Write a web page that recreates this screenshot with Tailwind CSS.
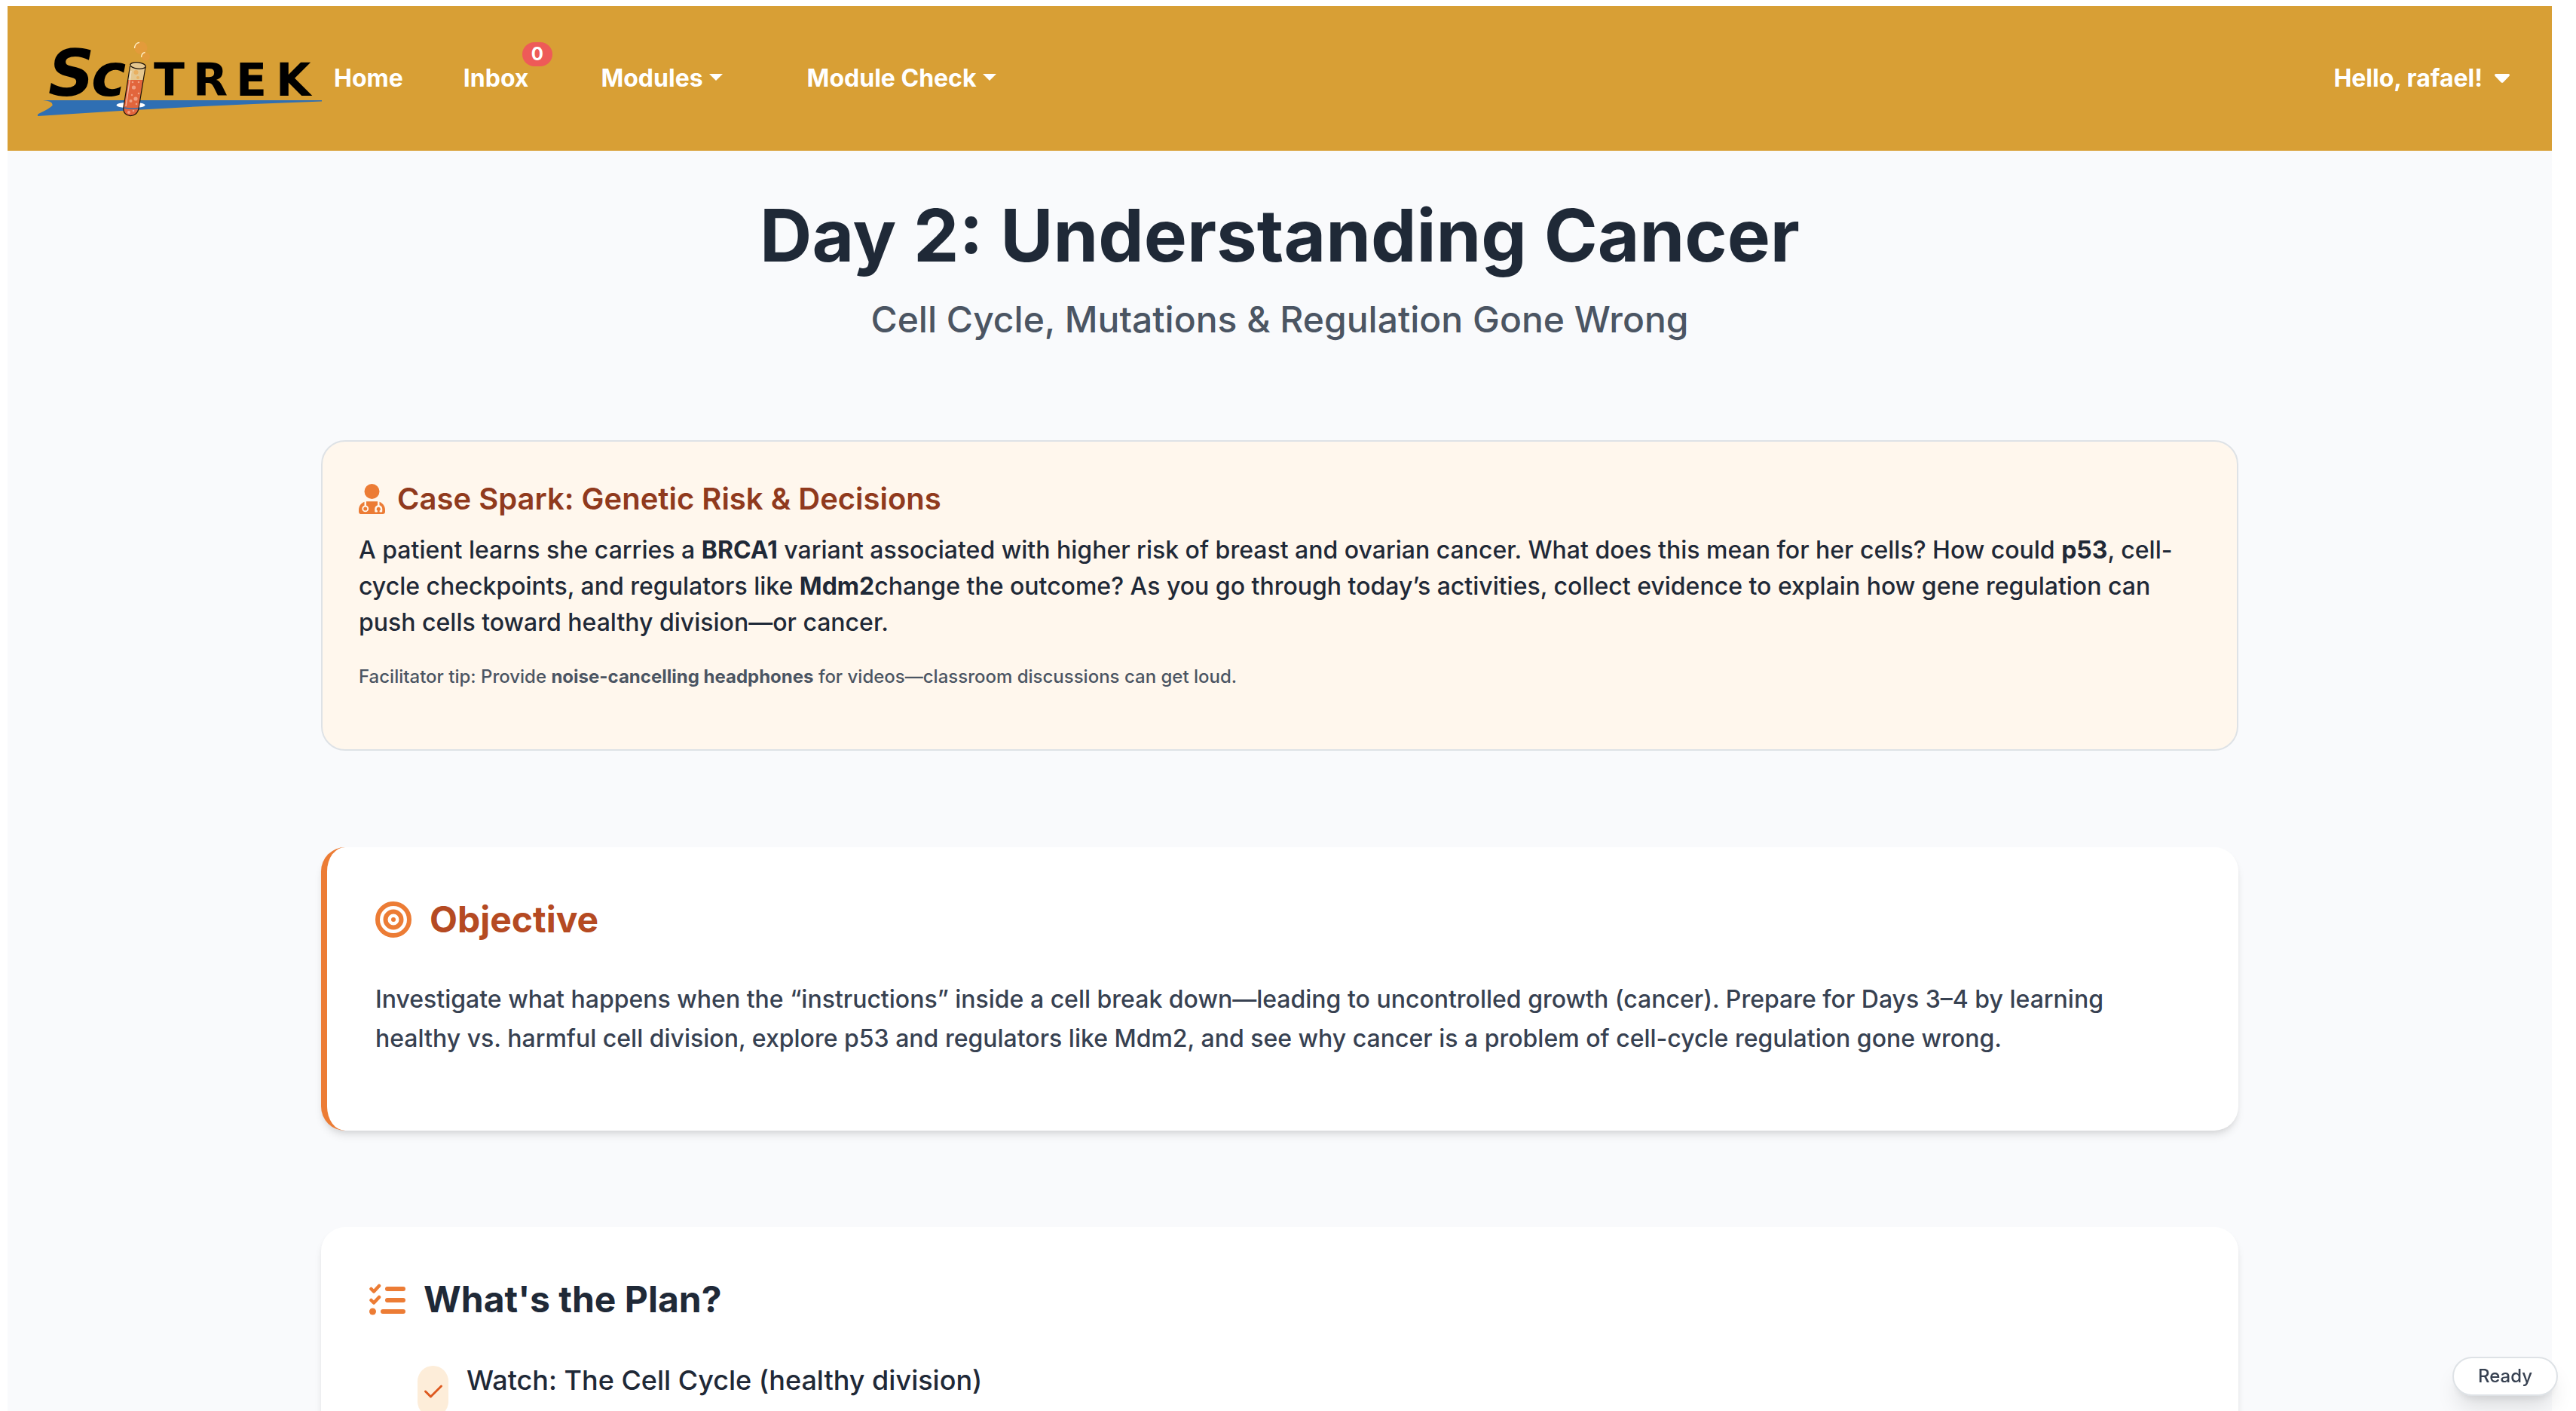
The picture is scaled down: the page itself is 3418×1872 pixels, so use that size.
<!DOCTYPE html>
<html lang="en">
<head>
<meta charset="utf-8">
<title>SciTrek – Day 2: Understanding Cancer</title>
<meta name="viewport" content="width=device-width, initial-scale=1">
<script src="https://cdn.jsdelivr.net/npm/@tailwindcss/browser@4"></script>
</head>
<body class="flex min-h-screen flex-col bg-white pt-2 pr-8 pl-[10px] font-['Inter',sans-serif] text-[32px] leading-[48px] font-medium text-[#1f2937]">

<header class="flex min-h-[192px] shrink-0 items-center bg-[#d89f35] pr-14 pl-10 font-bold text-white">
  <a href="#" class="mr-4 shrink-0" aria-label="SciTrek">
    <svg width="377" height="104" viewBox="50 52 377 104">
      <path d="M57 133H427V134.500Q240 141 50 154Q49 152 52 150.500Q66 144 69.500 140Q71 134 57 133Z" fill="#2f6fb3"/>
      <g fill="#000" font-family="'DejaVu Sans',sans-serif" font-weight="700">
        <text x="64" y="127" font-size="85" font-style="oblique">S</text>
        <text x="121" y="127" font-size="78" font-style="oblique">c</text>
        <text x="204 256 313 366" y="127" font-size="60">TREK</text>
      </g>
      <ellipse cx="173.500" cy="139.500" rx="19" ry="4" fill="#fff"/>
      <path d="M172.500 87L163.800 143C163 157 182 157 184 144L193 88Z" fill="#e5c78f"/>
      <path d="M169.500 106L163.800 143C163 157 182 157 184 144L190 106Z" fill="#e2653c"/>
      <path d="M174 94L167 141" stroke="#fff" stroke-opacity=".5" stroke-width="1.500" fill="none"/>
      <g fill="#f0a183">
        <circle cx="177.500" cy="116" r="2.600"/><circle cx="180" cy="131" r="2.600"/><circle cx="173.500" cy="134" r="2"/>
        <circle cx="171" cy="149" r="2"/><circle cx="177" cy="147" r="1.300"/><circle cx="184" cy="109" r="1.300"/>
        <circle cx="176" cy="109" r="1.300"/><circle cx="184" cy="124" r="1.300"/><circle cx="175" cy="126" r="1.200"/><circle cx="181" cy="138" r="1.300"/>
      </g>
      <circle cx="180.500" cy="96" r="3" fill="#e9b061"/><circle cx="183" cy="103" r="2" fill="#e9b061"/>
      <path d="M164 143Q174 145 184 143.500" stroke="#2f6fb3" stroke-width="1.500" fill="none"/>
      <path d="M172.500 88L163.800 143C163 157 182 157 184 144L193 89" fill="none" stroke="#1c1208" stroke-width="1.200"/>
      <ellipse cx="183" cy="87" rx="10.300" ry="4.200" transform="rotate(6 183 87)" fill="#e5c78f" stroke="#1c1208" stroke-width="1.300"/>
      <circle cx="187" cy="63.500" r="8.500" fill="#e39b3b"/><circle cx="193.500" cy="75" r="5.500" fill="#e39b3b"/>
      <path d="M178.500 64Q179 57 185 56.300M187.500 76Q188 70 192.500 69.500" fill="none" stroke="#fff0c8" stroke-width="1.300"/>
    </svg>
  </a>
  <nav class="flex flex-1 items-center">
    <a href="#" class="mr-20">Home</a>
    <a href="#" class="relative mr-24">Inbox
      <span class="absolute -top-6 left-[78px] flex h-8 w-10 items-center justify-center rounded-full bg-[#ee5a58] text-2xl">0</span>
    </a>
    <button type="button" class="mr-28 flex items-center gap-2">Modules
      <svg width="18" height="9" viewBox="0 0 18 9" class="mb-1" fill="currentColor"><path d="M0 0H18L9 9Z"/></svg>
    </button>
    <button type="button" class="flex items-center gap-2">Module Check
      <svg width="18" height="9" viewBox="0 0 18 9" class="mb-1" fill="currentColor"><path d="M0 0H18L9 9Z"/></svg>
    </button>
    <button type="button" class="ml-auto flex items-center gap-4">Hello, rafael!
      <svg width="20" height="12" viewBox="0 0 20 12" fill="currentColor"><path d="M1.500 0H18.500Q20 .2 20 1.500Q20 2.300 19.300 3L11.700 11Q10 12.700 8.300 11L.7 3Q0 2.300 0 1.500Q0 .2 1.500 0Z"/></svg>
    </button>
  </nav>
</header>

<main class="flex-1 bg-[#f9fafc]">
  <div class="mx-auto max-w-[2544px]">
    <div class="pt-16 pb-30 text-center">
      <h1 class="text-[96px] leading-[96px] font-bold">Day 2: Understanding Cancer</h1>
      <p class="mt-6 text-5xl leading-[80px] text-[#4b5563]">Cell Cycle, Mutations &amp; Regulation Gone Wrong</p>
    </div>

    <section class="rounded-[32px] border-2 border-[#dee2e6] bg-[#fff7ed] px-12 pt-12 pb-19">
      <h2 class="mb-4 flex items-center gap-4 text-[40px] leading-[56px] font-semibold text-[#903a1d]">
        <svg width="35" height="40" viewBox="0 0 448 512" fill="#ec7c35"><path d="M224 256a128 128 0 1 0 0-256 128 128 0 1 0 0 256zM96 303.100C40.800 323.500 0 377 0 440v32c0 22 18 40 40 40H408c22 0 40-18 40-40V440c0-63-40.800-116.500-96-136.900V362c27.600 7.100 48 32.200 48 62v40c0 8.800-7.200 16-16 16H368c-8.800 0-16-7.200-16-16s7.200-16 16-16V424c0-17.700-14.300-32-32-32s-32 14.300-32 32v24c8.800 0 16 7.200 16 16s-7.200 16-16 16H288c-8.800 0-16-7.200-16-16V424c0-29.800 20.400-54.900 48-62V297q-10-1-19-1H147q-10 0-19 1v70.700c23.100 6.900 40 28.300 40 53.700 0 30.900-25.100 56-56 56s-56-25.100-56-56c0-25.400 16.900-46.800 40-53.700zM144 421a32 32 0 1 0-64 0 32 32 0 1 0 64 0z" fill-rule="evenodd"/></svg>
        Case Spark: Genetic Risk &amp; Decisions
      </h2>
      <p class="mb-7">A patient learns she carries a <b class="font-bold">BRCA1</b> variant associated with higher risk of breast and ovarian cancer. What does this mean for her cells? How could <b class="font-bold">p53</b>, cell-cycle checkpoints, and regulators like <b class="font-bold">Mdm2</b>change the outcome? As you go through today’s activities, collect evidence to explain how gene regulation can push cells toward healthy division—or cancer.</p>
      <p class="text-2xl leading-10 text-[#4b5563]">Facilitator tip: Provide <b class="font-bold">noise-cancelling headphones</b> for videos—classroom discussions can get loud.</p>
    </section>

    <section class="mt-32 rounded-[32px] border-l-8 border-[#ec7c35] bg-white px-16 pt-16 pb-24 shadow-[0_8px_12px_-2px_rgba(0,0,0,0.1),0_4px_8px_-4px_rgba(0,0,0,0.1)]">
      <h2 class="mb-12 flex items-center gap-6 text-5xl leading-[64px] font-bold text-[#b54a22]">
        <svg width="48" height="48" viewBox="0 0 48 48" fill="none" stroke="#ec7c35" stroke-width="6"><circle cx="24" cy="24" r="21"/><circle cx="24" cy="24" r="10.500"/><circle cx="24" cy="24" r="3" fill="#ec7c35" stroke="none"/></svg>
        Objective
      </h2>
      <p class="leading-[52px] text-[#374151]">Investigate what happens when the “instructions” inside a cell break down—leading to uncontrolled growth (cancer). Prepare for Days 3–4 by learning healthy vs. harmful cell division, explore p53 and regulators like Mdm2, and see why cancer is a problem of cell-cycle regulation gone wrong.</p>
    </section>

    <section class="mt-32 rounded-t-[32px] bg-white px-16 pt-16 shadow-[0_8px_12px_-2px_rgba(0,0,0,0.1),0_4px_8px_-4px_rgba(0,0,0,0.1)]">
      <h2 class="mb-12 flex items-center gap-6 text-5xl leading-[64px] font-bold">
        <svg width="48" height="42" viewBox="0 0 48 42" fill="none" stroke="#ec7c35" stroke-linecap="round" stroke-linejoin="round"><path d="M2.500 7L6 10.500L13 3M2.500 22L6 25.500L13 18" stroke-width="4.500"/><path d="M24 7H45M24 22H45M18 37H45" stroke-width="6"/><circle cx="4.500" cy="37" r="4.500" fill="#ec7c35" stroke="none"/></svg>
        What's the Plan?
      </h2>
      <ul class="pl-16">
        <li class="flex gap-6">
          <span class="mt-2 flex h-[68px] w-[41px] items-center justify-center rounded-full bg-[#fdedd9]">
            <svg width="26" height="20" viewBox="0 0 26 20" fill="none" stroke="#dd5a20" stroke-width="3" stroke-linecap="round" stroke-linejoin="round"><path d="M2.500 10L9.500 17L23.500 3"/></svg>
          </span>
          <span class="text-4xl leading-[54px]">Watch: The Cell Cycle (healthy division)</span>
        </li>
      </ul>
    </section>
  </div>
</main>

<button type="button" class="fixed right-6 bottom-5 h-[52px] w-[140px] rounded-full border-2 border-[#dee2e6] bg-white text-2xl text-[#374151] shadow-[0_20px_30px_-6px_rgba(0,0,0,0.12),0_8px_12px_-6px_rgba(0,0,0,0.1)]">Ready</button>
</body>
</html>
